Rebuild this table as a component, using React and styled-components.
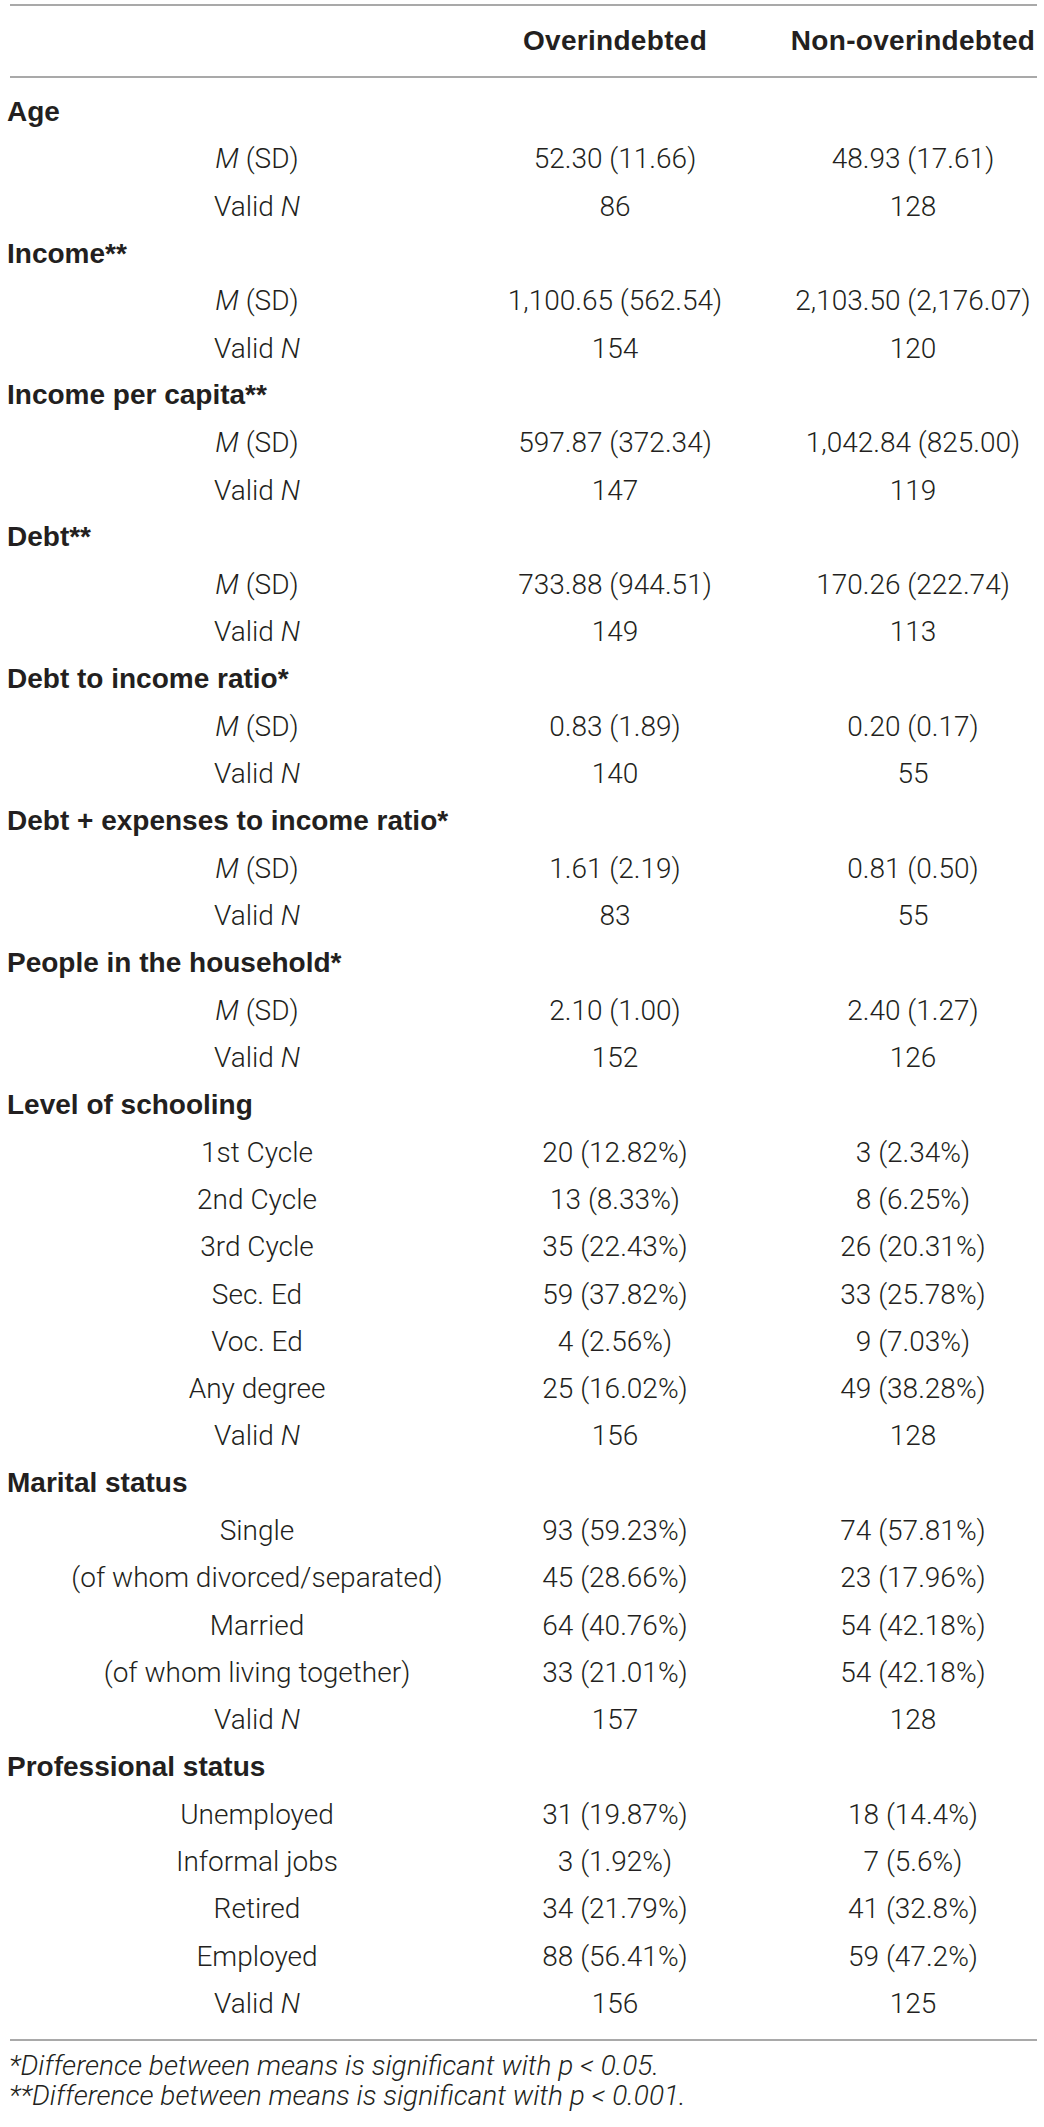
import React from "react";
import styled, { createGlobalStyle } from "styled-components";

const GlobalStyle = createGlobalStyle`
  html, body { margin: 0; padding: 0; background: #ffffff; }
  body { font-family: Roboto, "Liberation Sans", Arial, sans-serif; color: #231f20; }
`;

const COLS = "448px 334px 262px";

const Page = styled.div`
  width: 1044px;
  padding-top: 4px;
  box-sizing: border-box;
`;

const Rule = styled.div`
  height: 2px;
  margin: 0 7px 0 10px;
  background: #a9a9a9;
`;

const HeaderRow = styled.div`
  display: grid;
  grid-template-columns: ${COLS};
  height: 70px;
  align-items: center;
`;

const HeadCell = styled.div`
  grid-column: ${(p) => p.$col};
  text-align: center;
  font-family: "Liberation Sans", Arial, sans-serif;
  font-weight: 700;
  font-size: 28px;
  letter-spacing: 0.3px;
  color: #231f20;
  white-space: nowrap;
`;

const Body = styled.div`
  display: grid;
  grid-template-columns: ${COLS};
  grid-auto-rows: 47.3px;
  align-items: center;
  padding: 10px 0 12px;
`;

const SectionTitle = styled.div`
  grid-column: 1 / -1;
  padding-left: 7px;
  font-family: "Liberation Sans", Arial, sans-serif;
  font-weight: 700;
  font-size: 28px;
  color: #231f20;
  white-space: nowrap;
`;

const SubLabel = styled.div`
  padding-left: 66px;
  text-align: center;
  font-weight: 300;
  font-size: 28px;
  white-space: nowrap;
`;

const Value = styled.div`
  text-align: center;
  font-weight: 300;
  font-size: 28px;
  white-space: nowrap;
`;

const Em = styled.i`
  font-style: italic;
`;

const Notes = styled.div`
  padding: 10px 0 0 9px;
`;

const Note = styled.p`
  margin: 0;
  font-style: italic;
  font-weight: 300;
  font-size: 28px;
  line-height: 30px;
  white-space: nowrap;
`;

const MSD = () => (
  <>
    <Em>M</Em> (SD)
  </>
);
const VN = () => (
  <>
    Valid <Em>N</Em>
  </>
);

const sections = [
  { title: "Age", rows: [[<MSD />, "52.30 (11.66)", "48.93 (17.61)"], [<VN />, "86", "128"]] },
  { title: "Income**", rows: [[<MSD />, "1,100.65 (562.54)", "2,103.50 (2,176.07)"], [<VN />, "154", "120"]] },
  { title: "Income per capita**", rows: [[<MSD />, "597.87 (372.34)", "1,042.84 (825.00)"], [<VN />, "147", "119"]] },
  { title: "Debt**", rows: [[<MSD />, "733.88 (944.51)", "170.26 (222.74)"], [<VN />, "149", "113"]] },
  { title: "Debt to income ratio*", rows: [[<MSD />, "0.83 (1.89)", "0.20 (0.17)"], [<VN />, "140", "55"]] },
  { title: "Debt + expenses to income ratio*", rows: [[<MSD />, "1.61 (2.19)", "0.81 (0.50)"], [<VN />, "83", "55"]] },
  { title: "People in the household*", rows: [[<MSD />, "2.10 (1.00)", "2.40 (1.27)"], [<VN />, "152", "126"]] },
  {
    title: "Level of schooling",
    rows: [
      ["1st Cycle", "20 (12.82%)", "3 (2.34%)"],
      ["2nd Cycle", "13 (8.33%)", "8 (6.25%)"],
      ["3rd Cycle", "35 (22.43%)", "26 (20.31%)"],
      ["Sec. Ed", "59 (37.82%)", "33 (25.78%)"],
      ["Voc. Ed", "4 (2.56%)", "9 (7.03%)"],
      ["Any degree", "25 (16.02%)", "49 (38.28%)"],
      [<VN />, "156", "128"],
    ],
  },
  {
    title: "Marital status",
    rows: [
      ["Single", "93 (59.23%)", "74 (57.81%)"],
      ["(of whom divorced/separated)", "45 (28.66%)", "23 (17.96%)"],
      ["Married", "64 (40.76%)", "54 (42.18%)"],
      ["(of whom living together)", "33 (21.01%)", "54 (42.18%)"],
      [<VN />, "157", "128"],
    ],
  },
  {
    title: "Professional status",
    rows: [
      ["Unemployed", "31 (19.87%)", "18 (14.4%)"],
      ["Informal jobs", "3 (1.92%)", "7 (5.6%)"],
      ["Retired", "34 (21.79%)", "41 (32.8%)"],
      ["Employed", "88 (56.41%)", "59 (47.2%)"],
      [<VN />, "156", "125"],
    ],
  },
];

export default function App() {
  return (
    <Page>
      <GlobalStyle />
      <Rule />
      <HeaderRow>
        <HeadCell $col={2}>Overindebted</HeadCell>
        <HeadCell $col={3}>Non-overindebted</HeadCell>
      </HeaderRow>
      <Rule />
      <Body>
        {sections.map((s) => (
          <React.Fragment key={s.title}>
            <SectionTitle>{s.title}</SectionTitle>
            {s.rows.map((r, i) => (
              <React.Fragment key={i}>
                <SubLabel>{r[0]}</SubLabel>
                <Value>{r[1]}</Value>
                <Value>{r[2]}</Value>
              </React.Fragment>
            ))}
          </React.Fragment>
        ))}
      </Body>
      <Rule />
      <Notes>
        <Note>*Difference between means is significant with p &lt; 0.05.</Note>
        <Note>**Difference between means is significant with p &lt; 0.001.</Note>
      </Notes>
    </Page>
  );
}
